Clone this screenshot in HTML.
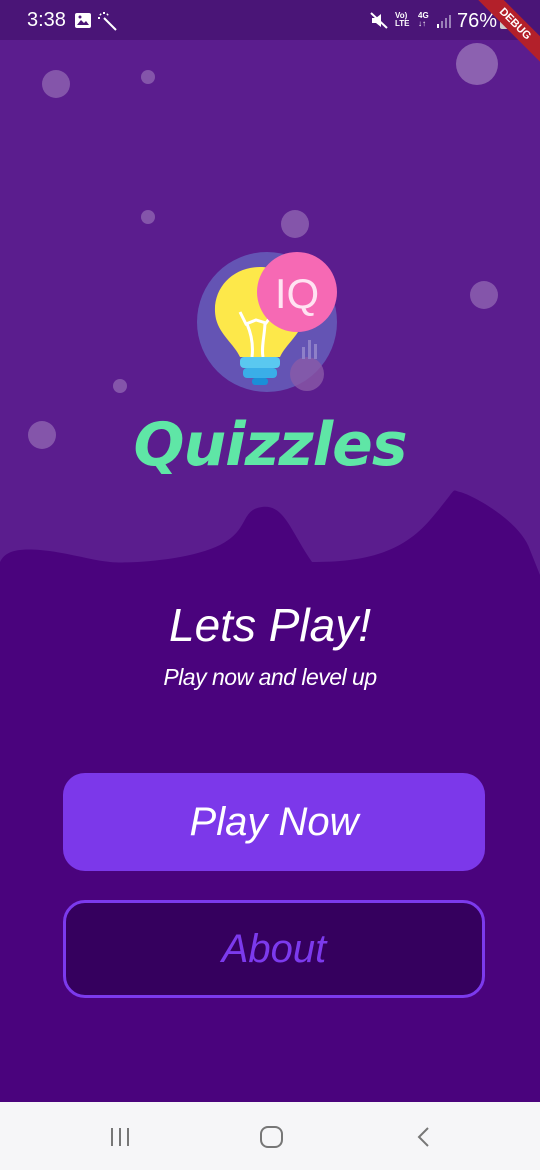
<!DOCTYPE html>
<html><head><meta charset="utf-8"><style>
*{margin:0;padding:0;box-sizing:border-box}
body{width:540px;height:1170px;overflow:hidden;background:#5b1d8e;font-family:"Liberation Sans",sans-serif;position:relative}
.sb{position:absolute;left:0;top:0;width:540px;height:40px;background:#4a1577;color:#fff}
.abs{position:absolute}
.c{position:absolute;border-radius:50%;background:rgba(255,255,255,0.25)}
.t{position:absolute;left:0;width:540px;text-align:center;color:#fff;font-style:italic}
.btn{position:absolute;left:63px;width:422px;height:98px;border-radius:22px;display:flex;align-items:center;justify-content:center;font-style:italic;font-size:40px}
.nav{position:absolute;left:0;top:1102px;width:540px;height:68px;background:#f6f6f8}
</style></head><body>
<div class="sb">
<div class="abs" style="left:27px;top:9px;font-size:20px">3:38</div>
<svg class="abs" style="left:74px;top:12px" width="18" height="17" viewBox="0 0 18 17"><rect x="1" y="1" width="16" height="15" rx="2" fill="#fff"/><path d="M3 13l4-5 3 3 2-2 3 4z" fill="#4a1577"/><circle cx="6" cy="5" r="1.5" fill="#4a1577"/></svg>
<svg class="abs" style="left:96px;top:10px" width="22" height="22" viewBox="0 0 22 22" stroke="#fff" stroke-width="2" fill="none"><path d="M8 8l12 12M4 4l1 1M8 2v2M2 8h2M12 4l-1 1"/></svg>
<svg class="abs" style="left:370px;top:12px" width="18" height="17" viewBox="0 0 18 17"><path d="M2 6h4l5-4v13l-5-4H2z" fill="#fff"/><path d="M1 1l16 15" stroke="#fff" stroke-width="2"/></svg>
<div class="abs" style="left:395px;top:12px;font-size:8px;line-height:8px;font-weight:bold">Vo)<br>LTE</div>
<div class="abs" style="left:418px;top:12px;font-size:8px;line-height:8px;font-weight:bold">4G<br>↓↑</div>
<svg class="abs" style="left:436px;top:13px" width="16" height="16"><rect x="1" y="11" width="2" height="4" fill="#fff"/><rect x="5" y="8" width="2" height="7" fill="#9a80b8"/><rect x="9" y="5" width="2" height="10" fill="#9a80b8"/><rect x="13" y="2" width="2" height="13" fill="#9a80b8"/></svg>
<div class="abs" style="left:457px;top:10px;font-size:20px">76%</div>
<div class="abs" style="left:500px;top:12px;width:10px;height:17px;background:#ccc;border-radius:2px"></div>
</div>
<div class="abs" style="left:455px;top:15px;width:120px;height:18px;background:#b3202a;transform:rotate(45deg);color:#fff;font-size:11px;font-weight:bold;text-align:center;line-height:18px">DEBUG</div>

<div class="c" style="left:42px;top:70px;width:28px;height:28px"></div>
<div class="c" style="left:141px;top:70px;width:14px;height:14px"></div>
<div class="c" style="left:456px;top:43px;width:42px;height:42px;background:rgba(255,255,255,0.3)"></div>
<div class="c" style="left:141px;top:210px;width:14px;height:14px"></div>
<div class="c" style="left:281px;top:210px;width:28px;height:28px"></div>
<div class="c" style="left:470px;top:281px;width:28px;height:28px"></div>
<div class="c" style="left:113px;top:379px;width:14px;height:14px"></div>
<div class="c" style="left:28px;top:421px;width:28px;height:28px"></div>

<svg class="abs" style="left:195px;top:252px" width="145" height="140" viewBox="0 0 145 140">
<circle cx="72" cy="70" r="70" fill="#6454b4"/>
<circle cx="112" cy="122" r="17" fill="#8a5aa8" opacity="0.8"/>
<path d="M65 15c-30 0-50 25-44 52 4 16 18 25 24 38h40c6-13 20-22 24-38 6-27-14-52-44-52z" fill="#fde84a"/>
<path d="M45 60l6 12 10-4 10 3 6-8M52 72c6 14 6 25 5 33M70 70c0 12-4 25-2 35" stroke="#fff" stroke-width="3" fill="none"/>
<rect x="45" y="105" width="40" height="11" rx="4" fill="#5ac8f0"/>
<rect x="48" y="116" width="34" height="10" rx="4" fill="#3aaee8"/>
<rect x="57" y="126" width="16" height="7" rx="3" fill="#1a8fd8"/>
<circle cx="102" cy="40" r="40" fill="#f669b4"/>
<text x="102" y="56" font-size="42" text-anchor="middle" fill="#ffe3f2" font-family="Liberation Sans">IQ</text>
<rect x="107" y="95" width="3" height="12" fill="#8e80c8"/><rect x="113" y="88" width="3" height="19" fill="#8e80c8"/><rect x="119" y="92" width="3" height="15" fill="#8e80c8"/>
</svg>

<div class="t" style="top:410px;font-size:60px;color:#5fe6a6;font-family:'DejaVu Sans',sans-serif;font-style:italic;font-weight:bold;letter-spacing:-1px">Quizzles</div>

<svg class="abs" style="left:0;top:480px" width="540" height="630" viewBox="0 480 540 630"><path d="M0 562C5 552 15 548 40 550S90 560 110 562 190 560 220 545 240 510 262 507 290 530 312 562C360 562 400 555 430 520S450 490 460 492 520 520 530 550L540 575V1110H0Z" fill="#4a037d"/></svg>

<div class="t" style="top:598px;font-size:46px">Lets Play!</div>
<div class="t" style="top:664px;font-size:23px;letter-spacing:-0.5px">Play now and level up</div>

<div class="btn" style="top:773px;background:#7c38ea;color:#fff">Play Now</div>
<div class="btn" style="top:900px;background:#35005e;border:3px solid #7c3aed;color:#7c3aed">About</div>

<div class="nav">
<svg class="abs" style="left:108px;top:24px" width="26" height="22"><path d="M4 2v18M12 2v18M20 2v18" stroke="#777" stroke-width="2"/></svg>
<svg class="abs" style="left:259px;top:24px" width="26" height="22"><rect x="2" y="1" width="21" height="20" rx="7" stroke="#777" stroke-width="2" fill="none"/></svg>
<svg class="abs" style="left:414px;top:24px" width="20" height="22"><path d="M14 2L5 11l9 9" stroke="#777" stroke-width="2" fill="none"/></svg>
</div>
</body></html>
